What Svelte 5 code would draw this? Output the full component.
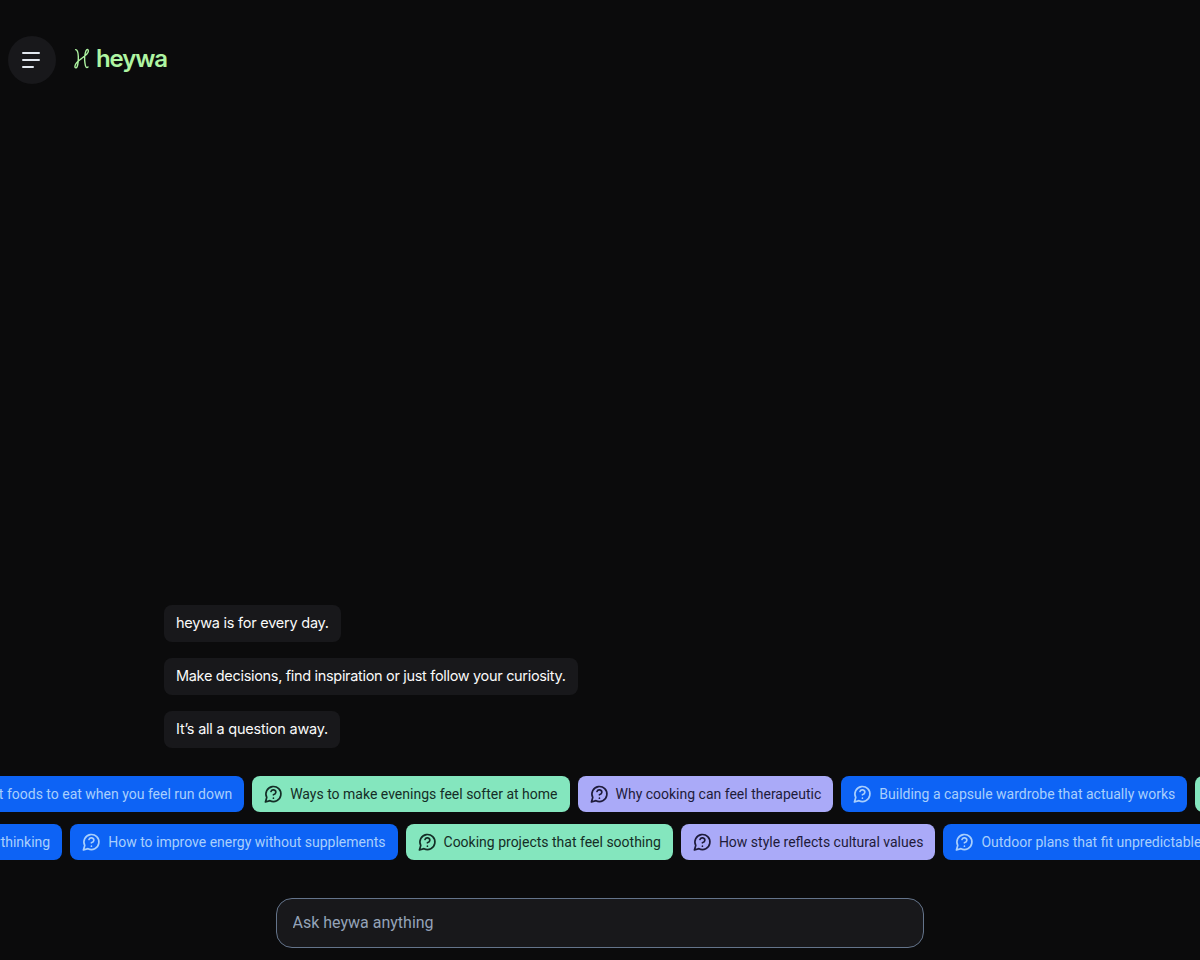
<script>
    const messages = [
        { text: "heywa is for every day.", size: "first" },
        {
            text: "Make decisions, find inspiration or just follow your curiosity.",
            size: "second",
        },
        { text: "It’s all a question away.", size: "third" },
    ];

    const rows = [
        {
            offset: -62.5,
            chips: [
                { text: "Best foods to eat when you feel run down", tone: "blue" },
                { text: "Ways to make evenings feel softer at home", tone: "green" },
                { text: "Why cooking can feel therapeutic", tone: "violet" },
                { text: "Building a capsule wardrobe that actually works", tone: "blue" },
                { text: "Simple rituals for a calmer morning", tone: "green" },
            ],
        },
        {
            offset: -143.3,
            chips: [
                { text: "How to stop overthinking", tone: "blue" },
                { text: "How to improve energy without supplements", tone: "blue" },
                { text: "Cooking projects that feel soothing", tone: "green" },
                { text: "How style reflects cultural values", tone: "violet" },
                { text: "Outdoor plans that fit unpredictable weather", tone: "blue" },
            ],
        },
    ];

    let question = $state("");
</script>

<div class="page">
    <header>
        <button class="menu" aria-label="Menu">
            <svg viewBox="0 0 24 24" width="24" height="24">
                <path d="M3 5h16M3 12h16M3 19h10" />
            </svg>
        </button>
        <div class="logo">
            <svg class="mark" viewBox="0 0 16 22" width="16" height="22">
                <path
                    d="M1.6 1.6C3.4 1.8 4.2 5 4.3 8.5C4.4 12 4.3 15.5 3.2 18.4C2.4 20.5.9 20.2.9 18.4C1 15 4.2 12.9 7.4 10.6C10.8 8.2 14.4 5.8 14.4 3.1C14.4 1.1 12.8.9 12 2.8C10.5 6.5 10.4 11.5 11 15.5C11.5 19 12.5 20.4 14 19"
                />
            </svg>
            <span>heywa</span>
        </div>
    </header>

    <main>
        <div class="messages">
            {#each messages as message}
                <p class={message.size}>{message.text}</p>
            {/each}
        </div>

        <div class="rows">
            {#each rows as row}
                <div class="row" style="margin-left: {row.offset}px">
                    {#each row.chips as chip}
                        <button class="chip {chip.tone}">
                            <svg viewBox="0 0 24 24" width="20" height="20">
                                <path d="M7.2 20A9 9 0 1 0 3.3 16.1L1.7 21.6Z" />
                                <path d="M8.4 9a3 3 0 0 1 5.83 1c0 2-3 3-3 3" />
                                <path d="M11.3 17h.01" />
                            </svg>
                            <span>{chip.text}</span>
                        </button>
                    {/each}
                </div>
            {/each}
        </div>

        <input bind:value={question} placeholder="Ask heywa anything" />
    </main>
</div>

<style>
    :global(body) {
        background: #0b0b0c;
    }

    .page {
        height: 960px;
        box-sizing: border-box;
        padding: 36px 0 12px;
        overflow: hidden;
        display: flex;
        flex-direction: column;
        justify-content: space-between;
        background: #0b0b0c;
        font-family: Roboto, sans-serif;
    }

    header {
        display: flex;
        align-items: center;
        gap: 18px;
        padding-left: 8px;
    }

    button {
        border: 0;
        font-family: inherit;
    }

    svg {
        flex: none;
        fill: none;
        stroke: currentColor;
        stroke-width: 2;
        stroke-linecap: round;
        stroke-linejoin: round;
    }

    .menu {
        width: 48px;
        height: 48px;
        padding: 0;
        display: grid;
        place-items: center;
        border-radius: 50%;
        background: #18181b;
        color: #e2e8f0;
    }

    .logo {
        display: flex;
        align-items: center;
        gap: 6px;
        color: #aff5a2;
        font: 600 24px/28px Inter, sans-serif;
        letter-spacing: -1.1px;
    }

    .logo span {
        margin-top: -2px;
    }

    .mark {
        margin-top: -3px;
        stroke-width: 1.4;
    }

    main {
        display: flex;
        flex-direction: column;
    }

    .messages {
        display: flex;
        flex-direction: column;
        align-items: flex-start;
        gap: 16px;
        padding-left: 164px;
    }

    .messages p {
        margin: 0;
        padding: 6px 12px 8px;
        border-radius: 8px;
        background: #18181b;
        color: #fafafa;
        font: 400 14.5px/23px Inter, sans-serif;
        white-space: nowrap;
    }

    .first {
        letter-spacing: -0.24px;
    }

    .second {
        letter-spacing: -0.32px;
    }

    .third {
        letter-spacing: -0.22px;
    }

    .rows {
        display: flex;
        flex-direction: column;
        gap: 12px;
        margin: 28px 0 38px;
    }

    .row {
        display: flex;
        gap: 8px;
    }

    .chip {
        flex: none;
        display: flex;
        align-items: center;
        gap: 6px;
        height: 36px;
        padding: 0 12px;
        border-radius: 8px;
        font-size: 14px;
        line-height: 20px;
        white-space: nowrap;
    }

    .blue {
        background: #0d63f5;
        color: #a9cffc;
    }

    .green {
        background: #84e6be;
        color: #142d26;
    }

    .violet {
        background: #aaaaf8;
        color: #1e1b3a;
    }

    input {
        align-self: center;
        box-sizing: border-box;
        width: 648px;
        height: 50px;
        padding: 0 16px 2px 15.5px;
        border: 1px solid #64748b;
        border-radius: 16px;
        background: #18181b;
        color: #f8fafc;
        font: 400 16px/24px Roboto, sans-serif;
    }

    input::placeholder {
        color: #94a3b8;
    }
</style>
